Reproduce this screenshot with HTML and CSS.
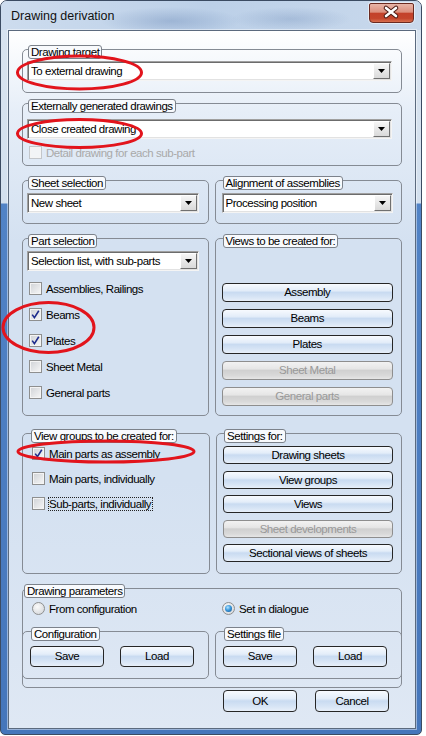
FILE: index.html
```html
<!DOCTYPE html>
<html>
<head>
    <title>Drawing derivation</title>
    <link rel="stylesheet" href="styles.css">
</head>
<body>

    <div class="window">
        <div class="titlebar">
            <span class="title">Drawing derivation</span>
            <div class="close">
                <svg width="45" height="19" viewBox="0 0 45 19">
                    <path d="M17 5 L27 13 M27 5 L17 13" stroke="#4a1a14" stroke-width="4.6" stroke-linecap="round" fill="none"/>
                    <path d="M17 5 L27 13 M27 5 L17 13" stroke="#fff" stroke-width="2.6" stroke-linecap="round" fill="none"/>
                </svg>
            </div>
        </div>

        <div class="client">
            <div class="group g-target">
                <span class="legend">Drawing target</span>
                <div class="combo"><span class="combo-text">To external drawing</span><span class="drop"><svg width="7" height="4"><polygon points="0,0 7,0 3.5,4" fill="#000"/></svg></span></div>
            </div>

            <div class="group g-external">
                <span class="legend">Externally generated drawings</span>
                <div class="combo combo-external"><span class="combo-text">Close created drawing</span><span class="drop"><svg width="7" height="4"><polygon points="0,0 7,0 3.5,4" fill="#000"/></svg></span></div>
                <div class="check-row off detail-row"><span class="box"></span>Detail drawing for each sub-part</div>
            </div>

            <div class="row row-sheet">
                <div class="group">
                    <span class="legend">Sheet selection</span>
                    <div class="combo"><span class="combo-text">New sheet</span><span class="drop"><svg width="7" height="4"><polygon points="0,0 7,0 3.5,4" fill="#000"/></svg></span></div>
                </div>
                <div class="group right">
                    <span class="legend">Alignment of assemblies</span>
                    <div class="combo"><span class="combo-text">Processing position</span><span class="drop"><svg width="7" height="4"><polygon points="0,0 7,0 3.5,4" fill="#000"/></svg></span></div>
                </div>
            </div>

            <div class="row row-parts">
                <div class="group">
                    <span class="legend">Part selection</span>
                    <div class="combo"><span class="combo-text">Selection list, with sub-parts</span><span class="drop"><svg width="7" height="4"><polygon points="0,0 7,0 3.5,4" fill="#000"/></svg></span></div>
                    <div class="check-list parts-list">
                        <div class="check-row"><span class="box"></span>Assemblies, Railings</div>
                        <div class="check-row"><span class="box"><svg width="11" height="11"><path d="M2.2 5.6 L4.4 8.6 L8.8 1.8" stroke="#1d2b8c" stroke-width="1.6" fill="none"/></svg></span>Beams</div>
                        <div class="check-row"><span class="box"><svg width="11" height="11"><path d="M2.2 5.6 L4.4 8.6 L8.8 1.8" stroke="#1d2b8c" stroke-width="1.6" fill="none"/></svg></span>Plates</div>
                        <div class="check-row"><span class="box"></span>Sheet Metal</div>
                        <div class="check-row"><span class="box"></span>General parts</div>
                    </div>
                </div>
                <div class="group right views">
                    <span class="legend">Views to be created for:</span>
                    <div class="btn-list views-list">
                        <div class="btn">Assembly</div>
                        <div class="btn">Beams</div>
                        <div class="btn">Plates</div>
                        <div class="btn off">Sheet Metal</div>
                        <div class="btn off">General parts</div>
                    </div>
                </div>
            </div>

            <div class="row row-groups">
                <div class="group groups-left">
                    <span class="legend">View groups to be created for:</span>
                    <div class="check-list groups-list">
                        <div class="check-row"><span class="box"><svg width="11" height="11"><path d="M2.2 5.6 L4.4 8.6 L8.8 1.8" stroke="#1d2b8c" stroke-width="1.6" fill="none"/></svg></span>Main parts as assembly</div>
                        <div class="check-row"><span class="box"></span>Main parts, individually</div>
                        <div class="check-row"><span class="box"></span><span class="focus">Sub-parts, individually</span></div>
                    </div>
                </div>
                <div class="group right settings">
                    <span class="legend">Settings for:</span>
                    <div class="btn-list settings-list">
                        <div class="btn">Drawing sheets</div>
                        <div class="btn">View groups</div>
                        <div class="btn">Views</div>
                        <div class="btn off">Sheet developments</div>
                        <div class="btn">Sectional views of sheets</div>
                    </div>
                </div>
            </div>

            <div class="group g-params">
                <span class="legend">Drawing parameters</span>
                <div class="radios">
                    <div class="radio-row"><span class="radio"></span>From configuration</div>
                    <div class="radio-row second"><span class="radio on"><i></i></span>Set in dialogue</div>
                </div>
                <div class="sub-row">
                    <div class="group sub">
                        <span class="legend">Configuration</span>
                        <div class="btn-pair">
                            <div class="btn wide">Save</div>
                            <div class="btn wide">Load</div>
                        </div>
                    </div>
                    <div class="group sub">
                        <span class="legend">Settings file</span>
                        <div class="btn-pair">
                            <div class="btn wide">Save</div>
                            <div class="btn wide">Load</div>
                        </div>
                    </div>
                </div>
            </div>

            <div class="actions">
                <div class="btn wide tall">OK</div>
                <div class="btn wide tall">Cancel</div>
            </div>
        </div>
    </div>

    <!-- red markings drawn over the screenshot -->
    <svg class="marks" width="426" height="736">
        <ellipse cx="79.5" cy="72.5" rx="62" ry="16.5"/>
        <ellipse cx="79.5" cy="133.5" rx="62" ry="14"/>
        <ellipse cx="48.5" cy="327.5" rx="45.5" ry="25"/>
        <ellipse cx="106" cy="451.5" rx="88" ry="10.5"/>
    </svg>

</body>
</html>
```

FILE: styles.css
```css
body {
    margin: 0;
    background: #fff;
    font-family: "Liberation Sans", Arial, sans-serif;
    font-size: 11.5px;
    letter-spacing: -0.45px;
    color: #000;
}

.window {
    box-sizing: border-box;
    width: 422px;
    height: 735px;
    border: 1px solid #3b4b62;
    border-radius: 7px 7px 5px 5px;
    padding: 0 5px 5px 7px;
    display: flex;
    flex-direction: column;
    background: linear-gradient(to bottom, #d9e4f0 0, #d3e0ee 202px, #5183c6 203px, #4576bb 100%);
}

.titlebar {
    height: 29px;
    margin: 0 -5px 0 -7px;
    padding: 0 7px 0 10px;
    display: flex;
    justify-content: space-between;
    align-items: flex-start;
    border-radius: 6px 6px 0 0;
    background:
        radial-gradient(ellipse 70px 14px at 170px 20px, rgba(70, 105, 160, 0.28), transparent),
        radial-gradient(ellipse 60px 12px at 290px 18px, rgba(70, 105, 160, 0.22), transparent),
        linear-gradient(to right, #cddcee, #bcd0e8 50%, #c9d9ec);
}

.title {
    font-size: 12.5px;
    letter-spacing: 0;
    line-height: 15px;
    padding-top: 8px;
    color: #111;
}

.close {
    box-sizing: border-box;
    width: 45px;
    height: 20px;
    margin-top: 2px;
    border: 1px solid #6b2a20;
    border-radius: 2px 2px 4px 4px;
    background: linear-gradient(#e8b5a8 0%, #dc8f7d 45%, #c3412a 52%, #c4452c 80%, #d8704f 100%);
    box-shadow: 0 0 0 1px rgba(255, 255, 255, 0.5);
}

.close svg {
    display: block;
    margin: -1px 0 0 -1px;
}

.client {
    flex: 1;
    border: 1px solid #5b6a7e;
    box-shadow: 0 0 0 1px rgba(255, 255, 255, 0.45);
    padding: 18px 13px 0;
    display: flex;
    flex-direction: column;
    background: linear-gradient(to bottom, #ffffff 0, #e6eef8 80px, #d4e1f1 210px, #d4e1f1 450px, #dfe8f4 100%);
}

.group {
    border: 1px solid #858b94;
    border-radius: 5px;
    display: flex;
    flex-direction: column;
    padding: 0 9px 12px 4px;
}

.legend {
    align-self: flex-start;
    margin: -5px 0 0 1px;
    padding: 0 2px;
    border: 1px solid #7c828b;
    border-radius: 3px;
    background: #f8fafd;
    line-height: 12px;
    white-space: nowrap;
}

.row {
    display: flex;
    gap: 6px;
}

.row > .group {
    flex: 1;
}

.group.right {
    padding-left: 6px;
    padding-right: 8px;
}

/* combo boxes */
.combo {
    box-sizing: border-box;
    height: 20px;
    margin-top: 3px;
    display: flex;
    align-items: center;
    background: #fff;
    border: 1px solid;
    border-color: #a0a0a0 #f4f4f4 #f4f4f4 #a0a0a0;
    box-shadow: inset 1px 1px 0 #6c6c6c, inset -1px -1px 0 #e2e2e2;
}

.g-target {
    padding-bottom: 11px;
}

.g-target .combo {
    margin-top: 2px;
}

.combo-external {
    margin-top: 6px;
}

.combo-text {
    flex: 1;
    padding-left: 3px;
    white-space: nowrap;
}

.drop {
    box-sizing: border-box;
    width: 17px;
    height: 16px;
    margin-right: 1px;
    display: flex;
    align-items: center;
    justify-content: center;
    border: 1px solid;
    border-color: #fff #707070 #707070 #fff;
    background: linear-gradient(#f6f6f6, #d9d9d9);
}

.drop svg {
    display: block;
}

/* checkboxes */
.check-list {
    display: flex;
    flex-direction: column;
    gap: 13px;
}

.check-row {
    display: flex;
    align-items: center;
    height: 13px;
    gap: 4px;
    white-space: nowrap;
    padding-left: 2px;
}

.box {
    box-sizing: border-box;
    width: 13px;
    height: 13px;
    border: 1px solid #8e8f8f;
    background: linear-gradient(135deg, #cfd2d6, #f7f7f7);
    box-shadow: inset 0 0 0 1px #f4f4f4;
    display: flex;
    align-items: center;
    justify-content: center;
}

.box svg {
    display: block;
}

.check-row.off {
    color: #a9a9a9;
}

.check-row.off .box {
    border-color: #c3c6ca;
    background: #f2f4f6;
}

.detail-row {
    margin-top: 7px;
}

.g-external {
    margin-top: 10px;
    padding-bottom: 6px;
}

.row-sheet {
    margin-top: 14px;
}

.row-sheet .group {
    padding-bottom: 10px;
}

.row-parts {
    margin-top: 14px;
}

.parts-list {
    margin-top: 11px;
}

.row-parts .group {
    padding-bottom: 16px;
}

.row-parts .views {
    padding-bottom: 9px;
}

.row-groups {
    margin-top: 17px;
}

.groups-left {
    padding-left: 7px;
}

.groups-list {
    margin-top: 4px;
    gap: 12px;
}

.focus {
    outline: 1px dotted #222;
    outline-offset: 0;
    padding: 0 1px 0 0;
}

/* buttons */
.btn {
    box-sizing: border-box;
    height: 19px;
    border: 1px solid #262626;
    border-radius: 4px;
    text-align: center;
    line-height: 17px;
    white-space: nowrap;
    background: linear-gradient(#f7fafe 0%, #e3edf9 38%, #c9dbf1 50%, #d6e4f5 75%, #e7eff9 100%);
}

.btn.off {
    border-color: #8e8e8e;
    color: #999;
    background: linear-gradient(#f2f2f2 0%, #e6e6e6 40%, #d0d0d0 50%, #d9d9d9 80%, #e6e6e6 100%);
}

.btn-list {
    display: flex;
    flex-direction: column;
}

.views-list {
    margin-top: auto;
    gap: 7px;
}

.settings {
    padding-bottom: 11px;
}

.settings-list {
    margin-top: 3px;
    gap: 6.5px;
}

.settings-list .btn {
    height: 18px;
    line-height: 16px;
}

.btn.wide {
    width: 74px;
    height: 21px;
    line-height: 19px;
}

.btn.tall {
    height: 22px;
    line-height: 20px;
}

/* drawing parameters */
.g-params {
    margin-top: 14px;
    padding: 0 0 8px 0;
}

.radios {
    display: grid;
    grid-template-columns: 1fr 1fr;
    gap: 6px;
    margin-top: 4px;
}

.radio-row {
    display: flex;
    align-items: center;
    gap: 4px;
    height: 13px;
    padding-left: 9px;
}

.radio-row.second {
    padding-left: 7px;
}

.radio {
    box-sizing: border-box;
    width: 13px;
    height: 13px;
    border-radius: 50%;
    border: 1px solid #8e8f8f;
    background: radial-gradient(circle at 40% 35%, #fbfbfb, #cfd2d6);
    display: flex;
    align-items: center;
    justify-content: center;
}

.radio.on i {
    width: 7px;
    height: 7px;
    border-radius: 50%;
    background: radial-gradient(circle at 40% 35%, #b6e6ff 0, #3a98dc 45%, #0d4d8a 100%);
}

.sub-row {
    display: flex;
    gap: 6px;
    margin: 16px -1px 0;
}

.sub-row .sub {
    flex: 1;
    padding: 0 0 11px 7px;
}

.btn-pair {
    display: flex;
    gap: 16px;
    margin-top: 5px;
}

.actions {
    display: flex;
    justify-content: flex-end;
    gap: 18px;
    margin-top: 2px;
    padding-right: 13px;
}

.marks {
    position: absolute;
    top: 0;
    left: 0;
    pointer-events: none;
}

.marks ellipse {
    fill: none;
    stroke: #e2141c;
    stroke-width: 3;
}
```
